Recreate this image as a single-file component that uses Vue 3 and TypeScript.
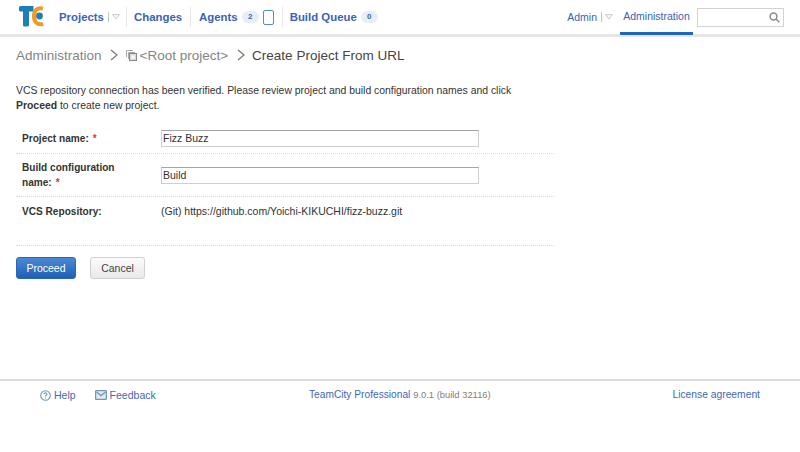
<script setup lang="ts">
const rows = [
  { lead: '', label: 'Project name:', value: 'Fizz Buzz' },
  { lead: 'Build configuration', label: 'name:', value: 'Build' },
]
</script>

<template>
  <div class="page">
    <header class="top">
      <svg class="logo" width="25" height="21" viewBox="0 0 25 21">
        <path d="M0 1.5 Q0 0 1.5 0 H14.5 V5.5 H10 V19 Q10 20.5 8.5 20.5 H5.5 Q4 20.5 4 19 V5.5 H1.5 Q0 5.5 0 4 Z" fill="#1b80b8" />
        <path d="M24 2.6 C18 0.8 15 5 15 10.2 C15 15.4 18 19.6 24 17.8" fill="none" stroke="#f39a1f" stroke-width="4" />
        <circle cx="20.5" cy="10" r="3.4" fill="#1b80b8" />
      </svg>
      <nav class="nav">
        <a class="item first">Projects<span class="pipe"></span><svg class="caret" width="8" height="6" viewBox="0 0 8 6" fill="none" stroke="#c4c4c4"><path d="M0.7 0.7 H7.3 L4 5 Z" /></svg></a>
        <a class="item sep">Changes</a>
        <a class="item sep agents">Agents<span class="badge">2</span><span class="device"></span></a>
        <a class="item sep">Build Queue<span class="badge">0</span></a>
      </nav>
      <div class="right">
        <a class="plain">Admin<span class="pipe"></span><svg class="caret" width="8" height="6" viewBox="0 0 8 6" fill="none" stroke="#c4c4c4"><path d="M0.7 0.7 H7.3 L4 5 Z" /></svg></a>
        <a class="plain active">Administration</a>
        <div class="search">
          <svg width="11" height="11" viewBox="0 0 11 11" fill="none" stroke="#8b8b8b" stroke-width="1.5">
            <circle cx="4.5" cy="4.5" r="3.4" />
            <path d="M7 7 L10.3 10.3" />
          </svg>
        </div>
      </div>
    </header>

    <div class="crumbs">
      <span>Administration</span>
      <svg class="chev" width="8" height="12" viewBox="0 0 8 12" fill="none" stroke="#777" stroke-width="1.2"><path d="M1 1 L7 6 L1 11" /></svg>
      <svg class="copy" width="11" height="11" viewBox="0 0 11 11" fill="none" stroke="#aaa"><path d="M0.5 7 V0.5 H7" /><path d="M2.5 9 V2.5 H9" /><rect x="3.5" y="3.5" width="7" height="7" fill="#ddd" stroke="#888" /><rect x="5.5" y="5.5" width="3" height="3" fill="#fff" stroke="none" /></svg>
      <span>&lt;Root project&gt;</span>
      <svg class="chev second" width="8" height="12" viewBox="0 0 8 12" fill="none" stroke="#777" stroke-width="1.2"><path d="M1 1 L7 6 L1 11" /></svg>
      <span class="current">Create Project From URL</span>
    </div>

    <main class="content">
      <p class="intro">VCS repository connection has been verified. Please review project and build configuration names and click<br /><b>Proceed</b> to create new project.</p>
      <div class="form">
        <div v-for="r in rows" :key="r.label" class="row">
          <div class="label">
            <div v-if="r.lead">{{ r.lead }}</div>
            <div class="label-line"><span>{{ r.label }}</span><em>*</em></div>
          </div>
          <input class="field" type="text" :value="r.value" />
        </div>
        <div class="row last">
          <span class="label">VCS Repository:</span>
          <span class="repo">(Git) https://github.com/Yoichi-KIKUCHI/fizz-buzz.git</span>
        </div>
      </div>
      <div class="actions">
        <button class="btn primary" type="button">Proceed</button>
        <button class="btn" type="button">Cancel</button>
      </div>
    </main>

    <footer class="foot">
      <div class="foot-left">
        <a class="link">
          <svg width="11" height="11" viewBox="0 0 12 12" fill="none" stroke="#6f9ab3" stroke-width="1.2"><circle cx="6" cy="6" r="5.2" /><path d="M4.4 4.6 C4.4 2.6 7.8 2.8 7.6 4.7 C7.5 5.8 6 5.8 6 7.2" /><path d="M6 8.2 V9.4" /></svg>
          Help
        </a>
        <a class="link">
          <svg width="12" height="10" viewBox="0 0 12 10" fill="#dfe9ef" stroke="#6f9ab3" stroke-width="1.3"><rect x="0.6" y="0.6" width="10.8" height="8.8" rx="1" /><path d="M1.5 2 L6 5.6 L10.5 2" fill="none" /></svg>
          Feedback
        </a>
      </div>
      <div class="foot-mid"><a class="link">TeamCity Professional</a> <span class="ver">9.0.1 (build 32116)</span></div>
      <a class="link license">License agreement</a>
    </footer>
  </div>
</template>

<style>
html, body { margin: 0; background: #fff; }
</style>

<style scoped>
.page {
  width: 800px;
  height: 452px;
  overflow: hidden;
  display: flex;
  flex-direction: column;
  font-family: "Liberation Sans", Arial, sans-serif;
  font-size: 11px;
  color: #333;
  background: #fff;
}
.top {
  height: 34px;
  flex: none;
  display: flex;
  align-items: center;
  padding: 0 16px 0 19px;
  border-bottom: 3px solid #e6e6e6;
}
.logo { flex: none; margin-right: 15px; margin-top: -1px; }
.nav { display: flex; align-items: center; }
.item {
  display: flex;
  align-items: center;
  height: 20px;
  color: #3a62b8;
  font-weight: 700;
  font-size: 11.4px;
  padding: 0 8px 0 7px;
}
.item.first { padding: 0 6px 0 0; }
.item.agents { padding-left: 8px; }
.sep { border-left: 1px solid #e8e8e8; }
.pipe { width: 1px; height: 10px; background: #c4c4c4; margin: 0 3px 0 4px; }
.caret { flex: none; }
.badge {
  display: inline-block;
  width: 17px;
  height: 12px;
  line-height: 12px;
  border-radius: 6px;
  background: #e6eef7;
  color: #3a62b8;
  font-size: 8px;
  font-weight: 700;
  text-align: center;
  margin-left: 4px;
}
.device {
  box-sizing: border-box;
  width: 11px;
  height: 15px;
  border: 1px solid #4d8fd0;
  border-radius: 2px;
  margin-left: 4px;
}
.right { margin-left: auto; display: flex; align-items: flex-start; height: 100%; }
.plain {
  display: flex;
  align-items: center;
  height: 34px;
  color: #3a62b8;
  font-size: 10.5px;
}
.plain.active {
  box-sizing: border-box;
  width: 73px;
  justify-content: center;
  margin: 0 4px 0 7px;
  height: 35px;
  padding-bottom: 1px;
  border-bottom: 3px solid #1f66c1;
}
.search {
  box-sizing: border-box;
  width: 87px;
  height: 19px;
  margin-top: 8px;
  border: 1px solid #d2d2d2;
  display: flex;
  align-items: center;
  justify-content: flex-end;
  padding-right: 3px;
}
.crumbs {
  display: flex;
  align-items: center;
  padding: 8px 16px 0;
  height: 20px;
  font-size: 13.5px;
  color: #848484;
}
.chev { margin: 0 8px; }
.chev.second { margin: 0 7px 0 9px; }
.copy { margin: 0 3px 0 0; }
.current { color: #444; }
.content { width: 538px; padding: 0 0 0 16px; flex: 1; }
.intro { margin: 18px 0 0; width: 540px; line-height: 15px; font-size: 10.42px; color: #333; white-space: nowrap; }
.form { margin-top: 11px; }
.row {
  display: flex;
  align-items: center;
  border-bottom: 1px dotted #d8d8d8;
  height: 30px;
  box-sizing: border-box;
  padding: 0 6px;
}
.row:nth-child(2) { height: 43px; }
.row.last { height: 49px; align-items: flex-start; padding-top: 7px; }
.label { width: 139px; flex: none; font-weight: 700; font-size: 10.1px; line-height: 15px; color: #333; box-sizing: border-box; }
.label-line { display: flex; gap: 4px; }
.label em { color: #d33; font-style: normal; }
.field {
  box-sizing: border-box;
  width: 318px;
  height: 17px;
  padding: 0 1px 1px;
  font: 10.5px "Liberation Sans", Arial, sans-serif;
  color: #333;
  border: 1px solid #cfcfcf;
  border-top-color: #a5a5a5;
  outline: none;
}
.repo { font-size: 10.5px; line-height: 15px; color: #333; }
.actions { display: flex; gap: 14px; margin-top: 11px; }
.btn {
  box-sizing: border-box;
  width: 55px;
  height: 22px;
  padding: 0;
  font: 10.5px "Liberation Sans", Arial, sans-serif;
  color: #444;
  background: linear-gradient(#fbfbfb, #e9e9e9);
  border: 1px solid #cfcfcf;
  border-radius: 3px;
}
.btn.primary {
  width: 60px;
  color: #fff;
  background: linear-gradient(#4a8ad4, #1f5fb4);
  border-color: #2a66b5;
}
.foot {
  flex: none;
  height: 73px;
  box-sizing: border-box;
  border-top: 2px solid #dcdcdc;
  display: flex;
  align-items: flex-start;
  padding: 8px 40px 0;
  font-size: 10.5px;
}
.foot-left { display: flex; gap: 19px; width: 269px; }
.link { color: #3f68b5; display: inline-flex; align-items: center; gap: 3px; }
.foot-mid { white-space: nowrap; font-size: 10.2px; }
.ver { color: #808080; font-size: 9.4px; }
.license { margin-left: auto; font-size: 10.3px; }
</style>
